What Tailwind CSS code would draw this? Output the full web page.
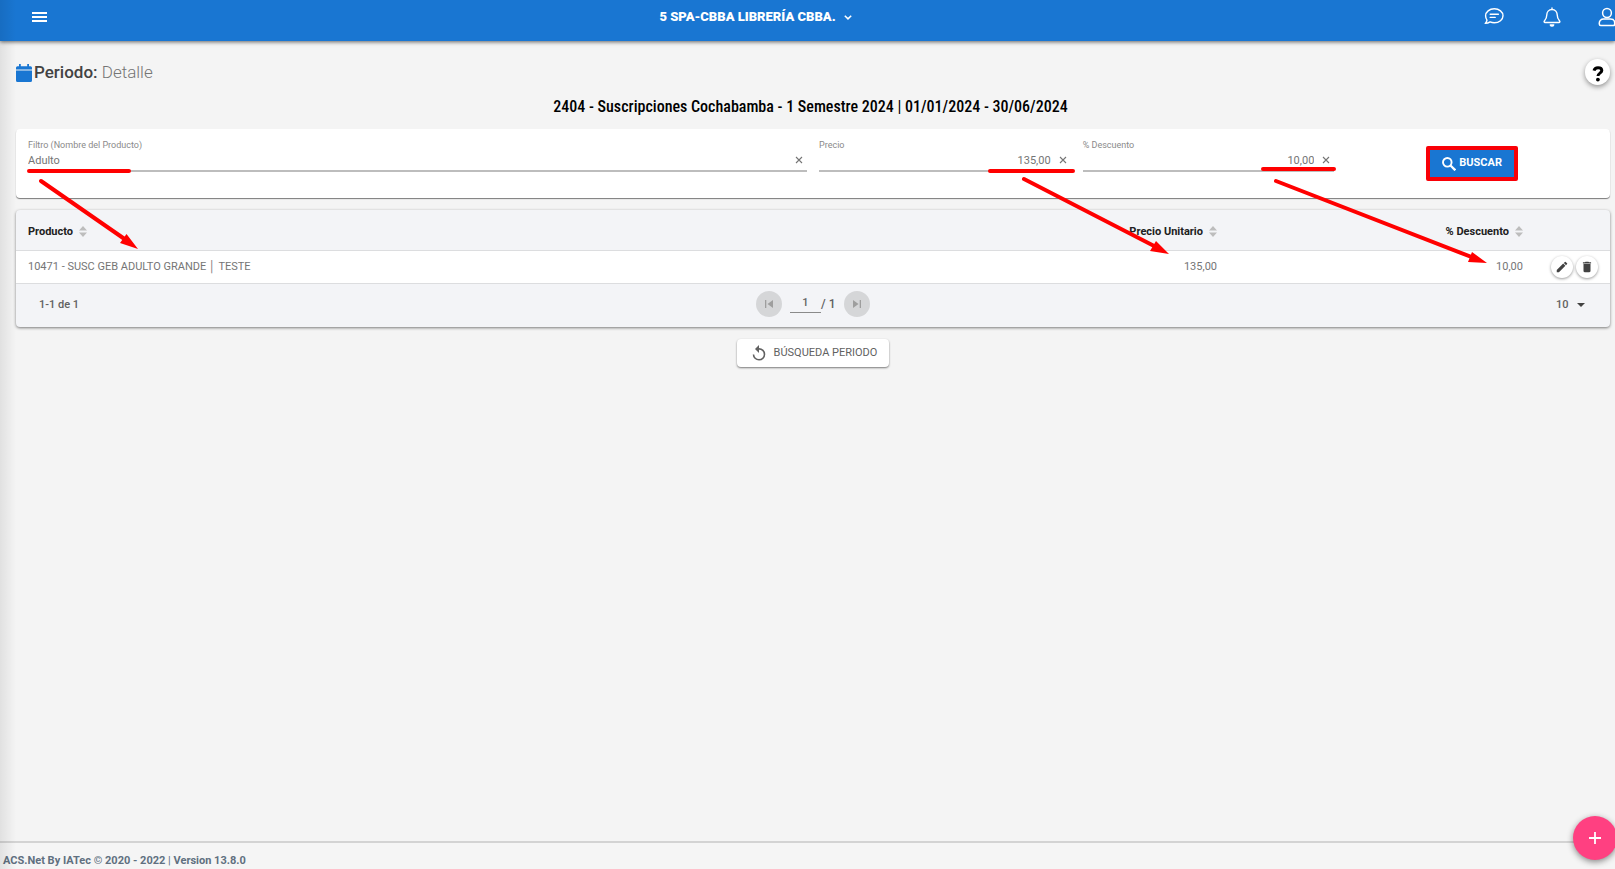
<!DOCTYPE html>
<html lang="es">
<head>
<meta charset="utf-8">
<meta name="viewport" content="width=device-width, initial-scale=1">
<title>Periodo: Detalle</title>
<script src="https://cdn.jsdelivr.net/npm/@tailwindcss/browser@4"></script>
</head>
<body class="relative flex min-h-screen flex-col overflow-x-hidden bg-[#f4f4f4] font-['Roboto',sans-serif] text-[11px] text-[#757575]">

<header class="relative flex h-[41px] items-start justify-between bg-[#1976d2] text-white shadow-[0_1px_4px_rgba(0,0,0,0.6)]">
  <button type="button" aria-label="Menú" class="ml-8 mt-3">
    <svg class="h-[11px] w-[15px]" viewBox="0 0 15 11" fill="currentColor"><path d="M0 0h15v2H0zM0 4h15v2H0zM0 8h15v2H0z"/></svg>
  </button>
  <button type="button" class="mr-5 mt-2 flex h-[18px] items-center gap-2 text-[13px] font-black">
    <span>5 SPA-CBBA LIBRERÍA CBBA.</span>
    <svg class="h-[5px] w-2" viewBox="0 0 8 5" fill="none" stroke="currentColor" stroke-width="1.5"><path d="M.8.7 4 3.9 7.2.7"/></svg>
  </button>
  <nav class="mt-[7px] flex gap-[38px]">
    <button type="button" aria-label="Mensajes">
      <svg class="h-5 w-5" viewBox="0 0 20 20" fill="none" stroke="currentColor" stroke-width="1.4" stroke-linecap="round" stroke-linejoin="round"><path d="M10.3 1.8c4.900 0 8.700 3.100 8.700 7s-3.800 7-8.700 7c-1.500 0-3-.3-4.200-.9-1.400 1-3 1.500-4.900 1.500 1-.9 1.600-2 1.800-3.300C2.100 11.900 1.600 10.400 1.600 8.800c0-3.900 3.800-7 8.700-7z"/><path d="M6.200 7.200h8.200M6.200 10.400h5"/></svg>
    </button>
    <button type="button" aria-label="Notificaciones">
      <svg class="h-5 w-5" viewBox="0 0 20 20" fill="none" stroke="currentColor" stroke-width="1.4" stroke-linecap="round" stroke-linejoin="round"><path d="M10 1v1.500M10 2.500c-3.300 0-5.200 2.500-5.200 5.300 0 3.600-1 4.800-2.400 6.200-.6.700-.2 1.500.6 1.500h14c.8 0 1.200-.8.600-1.500-1.400-1.400-2.400-2.600-2.400-6.200 0-2.800-1.900-5.300-5.200-5.300z"/><path d="M8.300 17.900c.3.700.9 1.100 1.700 1.100s1.400-.4 1.700-1.100z" fill="currentColor"/></svg>
    </button>
    <button type="button" aria-label="Usuario" class="-ml-1 w-[19px] overflow-hidden">
      <svg class="h-5 w-5 max-w-none" viewBox="0 0 20 20" fill="none" stroke="currentColor" stroke-width="1.5"><circle cx="11" cy="6" r="4.400"/><path d="M7.500 12.100h7c2.500 0 4.200 1.700 4.200 4v1c0 .9-.6 1.500-1.500 1.500H4.800c-.9 0-1.500-.6-1.500-1.500v-1c0-2.300 1.700-4 4.200-4z"/></svg>
    </button>
  </nav>
</header>

<main class="flex flex-1 flex-col pl-4 pr-[5px]">
  <div class="flex h-11 items-start justify-between pt-[18px]">
    <h1 class="flex h-7 items-center gap-0.5 text-[17px] text-[#424242]">
      <svg class="h-[18px] w-4 text-[#1976d2]" viewBox="0 0 16 18" fill="currentColor"><path d="M3 0h1.800v2.300h6.400V0H13v2.300h1.500A1.500 1.500 0 0 1 16 3.800v1.700H0V3.800a1.500 1.500 0 0 1 1.500-1.500H3zM0 6.500h16v9.900a1.500 1.500 0 0 1-1.500 1.500h-13A1.500 1.500 0 0 1 0 16.400z"/></svg>
      <span class="font-medium">Periodo: <span class="font-light text-[#757575]">Detalle</span></span>
    </h1>
    <button type="button" aria-label="Ayuda" class="flex h-[26px] w-[25px] items-center justify-center rounded-full bg-white text-black shadow-[0_2px_5px_rgba(0,0,0,0.4)]">
      <svg class="mt-1 h-4 w-3" viewBox="0 0 12 16"><path d="M2 4.600C2.500 2.700 3.900 1.700 6 1.700c2.200 0 3.800 1.100 3.800 2.900 0 2.600-3.800 2.500-3.800 5.400" fill="none" stroke="currentColor" stroke-width="3"/><circle cx="5.900" cy="13.600" r="1.900" fill="currentColor"/></svg>
    </button>
  </div>

  <h2 class="mt-2 h-9 pr-[5px] pt-0.5 text-center font-['Roboto_Condensed','Roboto',sans-serif] text-[16px] leading-6 font-medium text-black">2404 - Suscripciones Cochabamba - 1 Semestre 2024&nbsp;<span class="font-normal">|</span>&nbsp;01/01/2024 - 30/06/2024</h2>

  <form class="grid h-[69px] grid-cols-12 rounded-sm bg-white px-1.5 shadow-[0_1px_1px_rgba(0,0,0,0.5)]">
    <div class="col-span-6 px-1.5 pt-2">
      <label for="producto" class="block h-4 text-[9px] leading-4 text-[#8a8a8a]">Filtro (Nombre del Producto)</label>
      <div class="flex h-[19px] items-start border-b-2 border-[#bdbdbd] pr-1">
        <input id="producto" type="text" value="Adulto" class="h-4 min-w-0 flex-1 outline-none">
        <button type="button" aria-label="Borrar producto" class="flex h-[14px] w-2 items-center"><svg class="h-2 w-2" viewBox="0 0 8 8" fill="none" stroke="currentColor" stroke-width="1.100"><path d="m1 1 6 6M7 1 1 7"/></svg></button>
      </div>
    </div>
    <div class="col-span-2 px-1.5 pt-2">
      <label for="precio" class="block h-4 text-[9px] leading-4 text-[#8a8a8a]">Precio</label>
      <div class="flex h-[19px] items-start gap-2 border-b-2 border-[#bdbdbd] pr-1">
        <input id="precio" type="text" value="135,00" class="h-4 min-w-0 flex-1 text-right outline-none">
        <button type="button" aria-label="Borrar precio" class="flex h-[14px] w-2 items-center"><svg class="h-2 w-2" viewBox="0 0 8 8" fill="none" stroke="currentColor" stroke-width="1.100"><path d="m1 1 6 6M7 1 1 7"/></svg></button>
      </div>
    </div>
    <div class="col-span-2 px-1.5 pt-2">
      <label for="descuento" class="block h-4 text-[9px] leading-4 text-[#8a8a8a]">% Descuento</label>
      <div class="flex h-[19px] items-start gap-2 border-b-2 border-[#bdbdbd] pr-1">
        <input id="descuento" type="text" value="10,00" class="h-4 min-w-0 flex-1 text-right outline-none">
        <button type="button" aria-label="Borrar descuento" class="flex h-[14px] w-2 items-center"><svg class="h-2 w-2" viewBox="0 0 8 8" fill="none" stroke="currentColor" stroke-width="1.100"><path d="m1 1 6 6M7 1 1 7"/></svg></button>
      </div>
    </div>
    <div class="col-span-2 flex items-start justify-center pt-[17px]">
      <button type="submit" class="flex h-[35px] w-[92px] items-center justify-center gap-[3px] rounded-xs border-4 border-[#f90007] bg-[#1976d2] font-bold text-white">
        <svg class="h-[14px] w-[14px]" viewBox="0 0 14 14" fill="none" stroke="currentColor"><circle cx="5.300" cy="5.300" r="4.300" stroke-width="1.900"/><path d="m8.500 8.500 4.800 4.800" stroke-width="2.300"/></svg>
        BUSCAR
      </button>
    </div>
  </form>

  <section class="mt-3 rounded-sm bg-[#f3f4f7] shadow-[0_1px_3px_rgba(0,0,0,0.5)]">
    <table class="w-full table-fixed border-collapse">
      <colgroup><col><col class="w-[19%]"><col class="w-[306px]"><col class="w-[87px]"></colgroup>
      <thead>
        <tr class="h-10 border-b border-[#dcdddf] text-[#212121]">
          <th scope="col" class="pl-3 pt-1 text-left font-bold"><span class="inline-flex items-center gap-1.5">Producto <svg class="h-[11px] w-2 text-[#bdbdbd]" viewBox="0 0 8 11" fill="currentColor"><path d="M0 4.500 4 0l4 4.500zM0 6.500h8L4 11z"/></svg></span></th>
          <th scope="col" class="pt-1 text-right font-bold"><span class="inline-flex items-center gap-1.5">Precio Unitario <svg class="h-[11px] w-2 text-[#bdbdbd]" viewBox="0 0 8 11" fill="currentColor"><path d="M0 4.500 4 0l4 4.500zM0 6.500h8L4 11z"/></svg></span></th>
          <th scope="col" class="pt-1 text-right font-bold"><span class="inline-flex items-center gap-1.5">% Descuento <svg class="h-[11px] w-2 text-[#bdbdbd]" viewBox="0 0 8 11" fill="currentColor"><path d="M0 4.500 4 0l4 4.500zM0 6.500h8L4 11z"/></svg></span></th>
          <td></td>
        </tr>
      </thead>
      <tbody>
        <tr class="h-[33px] border-b border-[#dcdddf] bg-white">
          <td class="pl-3 pt-0.5">10471 - SUSC GEB ADULTO GRANDE │ TESTE</td>
          <td class="pt-0.5 text-right">135,00</td>
          <td class="pt-0.5 text-right">10,00</td>
          <td>
            <div class="flex justify-end gap-[3px] pr-3 text-[#424242]">
              <button type="button" aria-label="Editar" class="flex h-[22px] w-[22px] items-center justify-center rounded-full bg-white shadow-[0_1px_3px_rgba(0,0,0,0.4)]"><svg class="h-[14px] w-[14px]" viewBox="0 0 24 24" fill="currentColor"><path d="M3 17.250V21h3.750L17.810 9.940l-3.750-3.750L3 17.250zM20.710 7.040a1 1 0 0 0 0-1.410l-2.340-2.340a1 1 0 0 0-1.410 0l-1.830 1.830 3.750 3.750 1.830-1.830z"/></svg></button>
              <button type="button" aria-label="Eliminar" class="flex h-[22px] w-[22px] items-center justify-center rounded-full bg-white shadow-[0_1px_3px_rgba(0,0,0,0.4)]"><svg class="h-[14px] w-[14px]" viewBox="0 0 24 24" fill="currentColor"><path d="M6 19c0 1.100.9 2 2 2h8c1.100 0 2-.9 2-2V7H6v12zM19 4h-3.500l-1-1h-5l-1 1H5v2h14V4z"/></svg></button>
            </div>
          </td>
        </tr>
      </tbody>
    </table>
    <div class="grid h-[43px] grid-cols-3 items-center px-[23px] pb-0.5 font-medium text-[#616161]">
      <span class="pt-0.5">1-1 de 1</span>
      <div class="flex items-center justify-center">
        <button type="button" disabled aria-label="Página anterior" class="flex h-[26px] w-[26px] items-center justify-center rounded-full bg-[#d5d6d8] text-[#9e9e9e]"><svg class="h-2 w-2" viewBox="0 0 8 8" fill="currentColor"><path d="M0 0h1.300v8H0zM8 0v8L2.500 4z"/></svg></button>
        <input type="text" aria-label="Página" value="1" class="ml-2 h-[18px] w-[31px] border-b border-[#8a8a8a] pb-0.5 text-center outline-none">
        <span class="mr-2 w-[15px] text-[12px]">/ 1</span>
        <button type="button" disabled aria-label="Página siguiente" class="flex h-[26px] w-[26px] items-center justify-center rounded-full bg-[#d5d6d8] text-[#9e9e9e]"><svg class="h-2 w-2" viewBox="0 0 8 8" fill="currentColor"><path d="M8 0H6.700v8H8zM0 0v8l5.500-4z"/></svg></button>
      </div>
      <div class="flex items-center justify-end gap-1.5 pt-0.5">
        <select aria-label="Filas por página" class="w-[15px] appearance-none outline-none"><option>10</option><option>25</option></select>
        <svg class="mr-0.5 h-1 w-2 text-[#424242]" viewBox="0 0 8 4" fill="currentColor"><path d="M0 0h8L4 4z"/></svg>
      </div>
    </div>
  </section>

  <div class="mt-3 flex justify-center">
    <button type="button" class="flex h-7 items-center gap-2 rounded-sm bg-white pl-[15px] pr-3 pt-0.5 text-[#616161] shadow-[0_1px_2px_rgba(0,0,0,0.5)]">
      <svg class="mb-0.5 h-4 w-[14px]" viewBox="0 0 14 16" fill="currentColor"><path d="M7 3V0L3 4l4 4V4.700a4.700 4.700 0 1 1-4.700 4.700H.7A6.300 6.300 0 1 0 7 3z"/></svg>
      BÚSQUEDA PERIODO
    </button>
  </div>
</main>

<footer class="flex h-7 items-center border-t-2 border-[#d3d3d3] bg-[#f5f5f5] pl-[3px] pt-2.5 font-bold text-[#607080]">
  <p>ACS.Net By IATec © 2020 - 2022 <span class="font-normal">|</span> Version 13.8.0</p>
</footer>

<button type="button" aria-label="Agregar" class="absolute -right-0.5 bottom-[9px] flex h-11 w-11 items-center justify-center rounded-full bg-[#ff4081] text-white shadow-[0_2px_6px_rgba(0,0,0,0.45)]">
  <svg class="h-3 w-3" viewBox="0 0 12 12" stroke="currentColor" stroke-width="1.800"><path d="M6 0v12M0 6h12"/></svg>
</button>

<!-- Shadow cast by the collapsed side menu -->
<div class="pointer-events-none absolute inset-y-0 left-0 w-4 bg-linear-to-r from-black/8 to-transparent"></div>

<!-- Hand-drawn annotations -->
<svg class="pointer-events-none absolute inset-0 h-full w-full" fill="#ff0000" stroke="#ff0000" stroke-width="4" stroke-linecap="round" aria-hidden="true">
  <path d="M29 171H129M990 171H1073M1263 169H1334" fill="none"/>
  <path d="M41 181 126 240M1024 179 1158 248M1276 181 1474 258" fill="none"/>
  <path d="M138 249 120 243 126.500 234zM1169 254 1150 251 1156 241zM1487 263 1468 262 1472 252z" stroke="none"/>
</svg>
</body>
</html>
